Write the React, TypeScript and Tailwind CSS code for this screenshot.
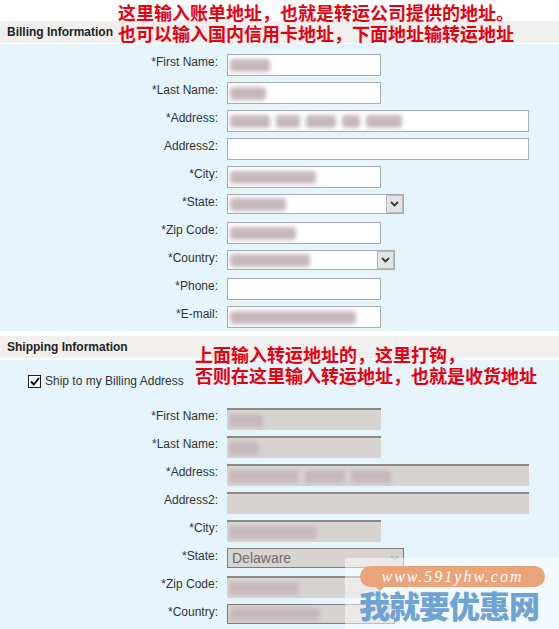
import { ReactNode } from 'react';

type Field = {
  label: string;
  kind: 'text' | 'select';
  width: number;
  blur?: number[];
  value?: string;
};

const billing: Field[] = [
  { label: '*First Name:', kind: 'text', width: 154, blur: [40] },
  { label: '*Last Name:', kind: 'text', width: 154, blur: [36] },
  { label: '*Address:', kind: 'text', width: 302, blur: [40, 24, 30, 18, 36] },
  { label: 'Address2:', kind: 'text', width: 302 },
  { label: '*City:', kind: 'text', width: 154, blur: [86] },
  { label: '*State:', kind: 'select', width: 177, blur: [56] },
  { label: '*Zip Code:', kind: 'text', width: 154, blur: [66] },
  { label: '*Country:', kind: 'select', width: 168, blur: [80] },
  { label: '*Phone:', kind: 'text', width: 154 },
  { label: '*E-mail:', kind: 'text', width: 154, blur: [126] },
];

const shipping: Field[] = [
  { label: '*First Name:', kind: 'text', width: 154, blur: [34] },
  { label: '*Last Name:', kind: 'text', width: 154, blur: [30] },
  { label: '*Address:', kind: 'text', width: 302, blur: [70, 40, 40] },
  { label: 'Address2:', kind: 'text', width: 302 },
  { label: '*City:', kind: 'text', width: 154, blur: [88] },
  { label: '*State:', kind: 'select', width: 177, value: 'Delaware' },
  { label: '*Zip Code:', kind: 'text', width: 154, blur: [70] },
  { label: '*Country:', kind: 'select', width: 168, blur: [90] },
];

function Smudge({ widths }: { widths: number[] }) {
  return (
    <div className="flex items-center gap-[6px] pl-[2px]">
      {widths.map((w, i) => (
        <div
          key={i}
          className="h-[13px] rounded-[3px] bg-[#c7b8be] blur-[2px]"
          style={{ width: w }}
        />
      ))}
    </div>
  );
}

function Chevron({ dim }: { dim?: boolean }) {
  return (
    <svg width="9" height="6" viewBox="0 0 9 6">
      <path
        d="M1 1 L4.5 4.5 L8 1"
        fill="none"
        stroke={dim ? '#b8b8b8' : '#3a3a3a'}
        strokeWidth="1.8"
      />
    </svg>
  );
}

function Control({ field, disabled }: { field: Field; disabled?: boolean }) {
  if (field.kind === 'select') {
    return (
      <div
        className={`flex h-[20px] items-stretch border ${
          disabled ? 'border-[#7a7a7a] bg-[#d8d4d1]' : 'border-[#a5acb2] bg-white'
        }`}
        style={{ width: field.width }}
      >
        <div className="flex flex-1 items-center overflow-hidden">
          {field.value ? (
            <span className="pl-[4px] text-[14px] text-[#6d6d6d]">{field.value}</span>
          ) : (
            field.blur && <Smudge widths={field.blur} />
          )}
        </div>
        <div
          className={`flex w-[17px] items-center justify-center ${
            disabled ? 'bg-[#d8d4d1]' : 'border border-[#b9b9b9] bg-[#e4e4e4]'
          }`}
        >
          <Chevron dim={disabled} />
        </div>
      </div>
    );
  }
  return (
    <div
      className={`flex h-[22px] items-center overflow-hidden ${
        disabled
          ? 'border-t-2 border-[#8a8a8a] bg-[#d8d4d1]'
          : 'border border-[#a5acb2] bg-white'
      }`}
      style={{ width: field.width }}
    >
      {field.blur && <Smudge widths={field.blur} />}
    </div>
  );
}

function Row({ label, children }: { label: string; children: ReactNode }) {
  return (
    <div className="flex h-[28px] items-start">
      <div className="w-[219px] pr-[1px] pt-[2px] text-right text-[12px] text-[#333]">
        {label}
      </div>
      <div className="ml-[8px] pt-[3px]">{children}</div>
    </div>
  );
}

function Header({ title }: { title: string }) {
  return (
    <div className="flex h-[22px] items-center bg-[#f1f0ef] pl-[7px] text-[12px] font-bold text-[#222]">
      {title}
    </div>
  );
}

function Note({ lines }: { lines: string[] }) {
  return (
    <div
      className="text-[18px] font-bold leading-[21px] text-[#e8000f]"
      style={{ fontFamily: '"Noto Sans CJK SC", sans-serif' }}
    >
      {lines.map((l) => (
        <div key={l}>{l}</div>
      ))}
    </div>
  );
}

export default function App() {
  return (
    <div
      className="relative h-[629px] w-[559px] overflow-hidden bg-white"
      style={{ fontFamily: '"Liberation Sans", Arial, sans-serif' }}
    >
      <div className="h-[21px]" />
      <Header title="Billing Information" />
      <div className="mt-[1px] bg-[#e6f4fc] pt-[7px]">
        {billing.map((f) => (
          <Row key={f.label} label={f.label}>
            <Control field={f} />
          </Row>
        ))}
      </div>

      <div className="h-[5px]" />
      <Header title="Shipping Information" />
      <div className="mt-[2px] h-[400px] bg-[#e6f4fc] pt-[10px]">
        <label className="flex h-[22px] items-center pl-[28px] text-[12px] text-[#333]">
          <span className="mr-[4px] flex h-[13px] w-[13px] items-center justify-center border border-[#1c1c1c] bg-white">
            <svg width="10" height="9" viewBox="0 0 10 9">
              <path d="M1 4.5 L3.8 7.5 L9 1" fill="none" stroke="#111" strokeWidth="2" />
            </svg>
          </span>
          Ship to my Billing Address
        </label>
        <div className="h-[13px]" />
        {shipping.map((f) => (
          <Row key={f.label} label={f.label}>
            <Control field={f} disabled />
          </Row>
        ))}
      </div>

      {/* red annotations drawn over the form */}
      <div className="absolute left-[118px] top-[2px]">
        <Note
          lines={[
            '这里输入账单地址，也就是转运公司提供的地址。',
            '也可以输入国内信用卡地址，下面地址输转运地址',
          ]}
        />
      </div>
      <div className="absolute left-[195px] top-[344px]">
        <Note
          lines={[
            '上面输入转运地址的，这里打钩，',
            '否则在这里输入转运地址，也就是收货地址',
          ]}
        />
      </div>

      {/* watermark */}
      <div className="absolute left-[345px] top-[558px] h-[71px] w-[214px] bg-white/50">
        <div className="relative ml-[15px] mt-[8px] flex h-[21px] w-[185px] items-center justify-center rounded-full bg-[#e9a47a]">
          <span
            className="text-[16px] italic tracking-[2px] text-white"
            style={{ fontFamily: '"Liberation Serif", serif' }}
          >
            www.591yhw.com
          </span>
          <div className="absolute -bottom-[4px] left-[14px] h-0 w-0 border-l-[6px] border-r-[6px] border-t-[6px] border-l-transparent border-r-transparent border-t-[#e9a47a]" />
        </div>
        <div
          className="ml-[14px] mt-[1px] text-[31px] font-black leading-[34px] tracking-[-1px] text-[#6ea3d4]"
          style={{ fontFamily: '"Noto Sans CJK SC", sans-serif' }}
        >
          我就要优惠网
        </div>
      </div>
    </div>
  );
}
